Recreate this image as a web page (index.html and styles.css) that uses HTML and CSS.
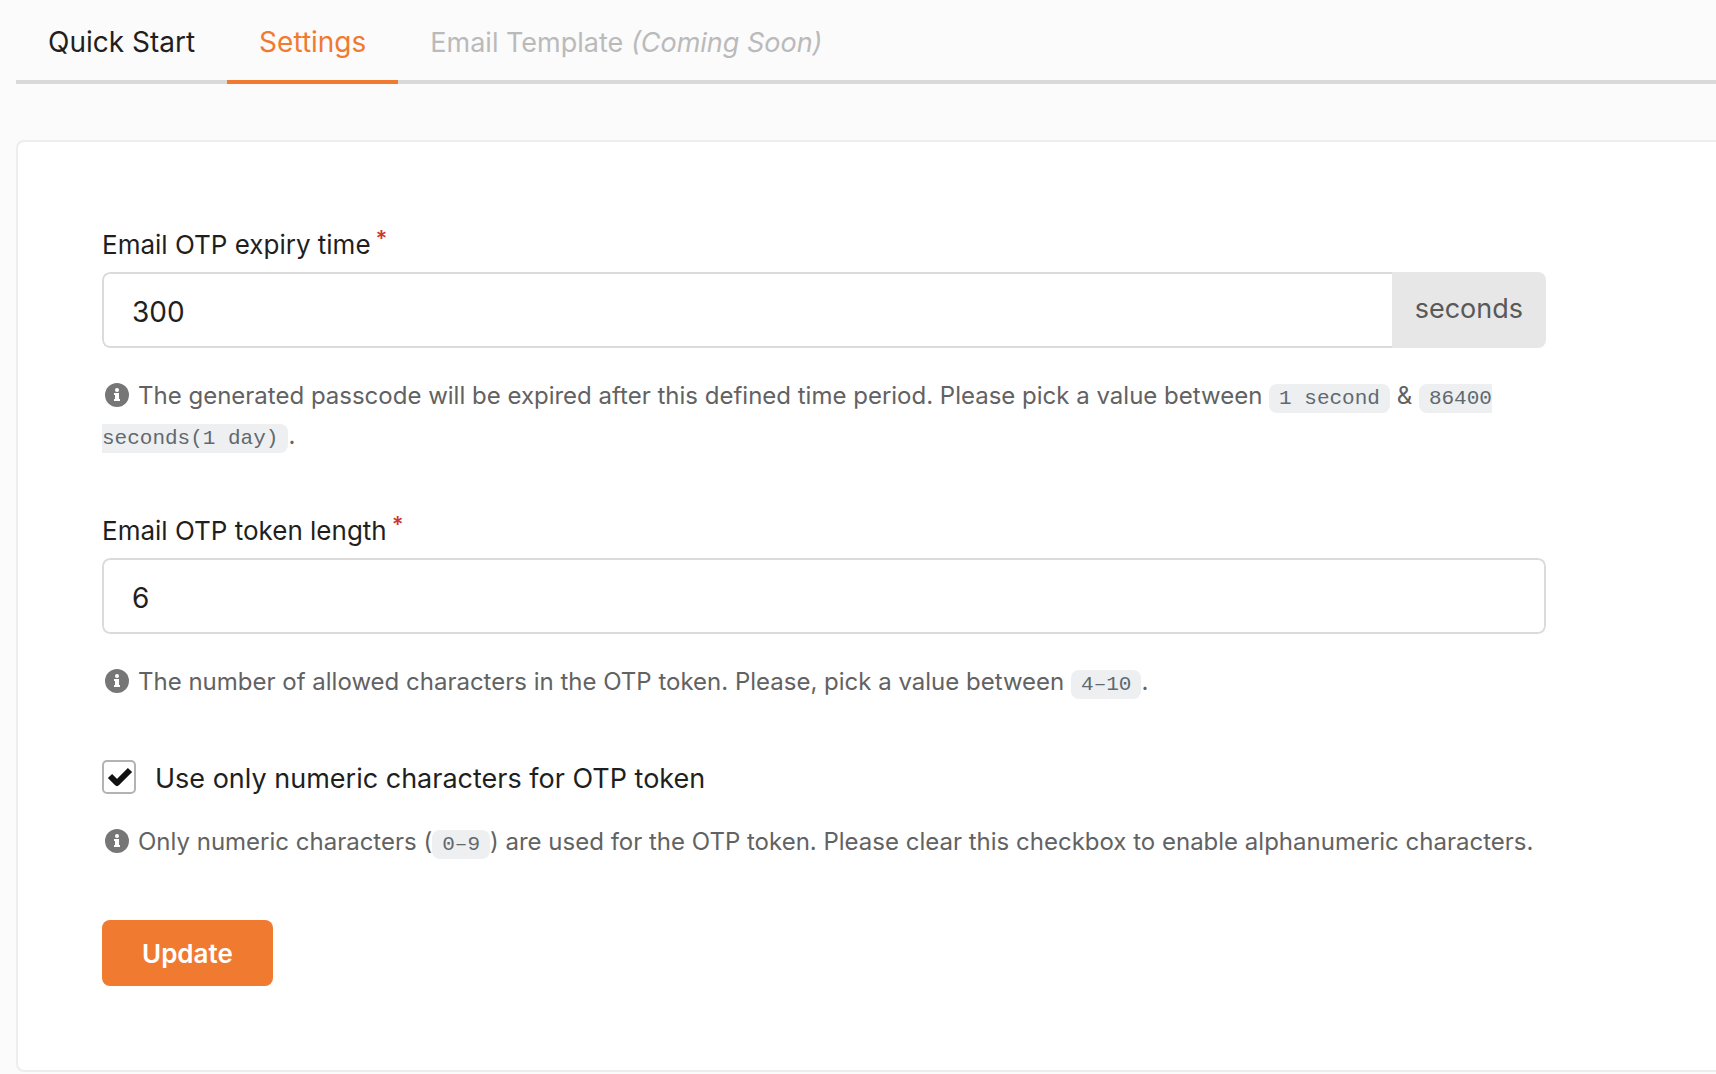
FILE: index.html
```html
<!DOCTYPE html>
<html lang="en">
<head>
<meta charset="utf-8">
<meta name="viewport" content="width=device-width, initial-scale=1">
<title>Email OTP Settings</title>
<link rel="stylesheet" href="styles.css">
</head>
<body>
<svg class="sprite" aria-hidden="true">
  <symbol id="info" viewBox="0 0 24 24">
    <circle cx="12" cy="12" r="12" fill="#767676"/>
    <circle cx="12" cy="7" r="2" fill="#fff"/>
    <path d="M9 10h5v6h1v2H9v-2h1v-4H9z" fill="#fff"/>
  </symbol>
</svg>
<nav class="tabs">
  <a class="tab" href="#quick-start">Quick Start</a>
  <a class="tab tab-active" href="#settings" aria-current="page">Settings</a>
  <a class="tab tab-disabled" aria-disabled="true" href="#email-template">Email Template <em>(Coming Soon)</em></a>
</nav>
<main class="card">
  <form class="form">
    <div class="field">
      <label class="label" for="expiry">Email OTP expiry time<span class="required">*</span></label>
      <div class="input-group">
        <input class="input" id="expiry" type="text" inputmode="numeric" value="300">
        <span class="addon">seconds</span>
      </div>
      <p class="hint"><svg class="icon"><use href="#info"/></svg>The generated passcode will be expired after this defined time period. Please pick a value between <code>1 second</code> &amp; <code>86400 seconds(1 day)</code>.</p>
    </div>
    <div class="field">
      <label class="label" for="length">Email OTP token length<span class="required">*</span></label>
      <div class="input-group">
        <input class="input" id="length" type="text" inputmode="numeric" value="6">
      </div>
      <p class="hint"><svg class="icon"><use href="#info"/></svg>The number of allowed characters in the OTP token. Please, pick a value between <code>4–10</code>.</p>
    </div>
    <div class="field">
      <div class="check-row">
        <span class="check">
          <input class="checkbox" id="numeric" type="checkbox" checked>
          <svg class="tick" viewBox="0 0 26 20" aria-hidden="true"><path d="M3 9l7 7L23 3" fill="none" stroke="#111" stroke-width="6" stroke-linejoin="round"/></svg>
        </span>
        <label class="check-label" for="numeric">Use only numeric characters for OTP token</label>
      </div>
      <p class="hint"><svg class="icon"><use href="#info"/></svg>Only numeric characters (<code>0–9</code>) are used for the OTP token. Please clear this checkbox to enable alphanumeric characters.</p>
    </div>
    <button class="button" type="submit">Update</button>
  </form>
</main>
</body>
</html>
```
FILE: styles.css
```css
* { box-sizing: border-box; }

body {
  margin: 0;
  padding-left: 16px;
  background: #fbfbfb;
  color: #1f1f1f;
  font-family: Inter, "Liberation Sans", sans-serif;
  overflow-x: hidden;
}

.sprite { display: none; }

.tabs {
  display: flex;
  height: 84px;
  box-shadow: inset 0 -4px #d9d9d9;
}

.tab {
  display: flex;
  align-items: center;
  padding: 4px 32px 0;
  border-bottom: 4px solid transparent;
  color: inherit;
  font-size: 28px;
  white-space: pre;
  text-decoration: none;
}

.tab-active {
  border-color: #f07a30;
  color: #f07a30;
}

.tab-disabled {
  color: #bababa;
  font-size: 27px;
}

.card {
  margin-top: 56px;
  padding: 86px 170px 84px 84px;
  border: 2px solid #ededed;
  border-right: 0;
  border-radius: 8px 0 0 8px;
  background: #fff;
}

.form {
  display: flex;
  flex-direction: column;
  align-items: stretch;
  gap: 58px;
}

.label {
  display: block;
  margin-bottom: 10px;
  font-size: 26px;
  line-height: 34px;
}

.required {
  margin-left: 5px;
  color: #cf372f;
  font-size: 22px;
  font-weight: 600;
  line-height: 0;
  vertical-align: 8px;
}

.input-group {
  display: flex;
  height: 76px;
  border-radius: 8px;
  overflow: hidden;
}

.input {
  flex: 1;
  min-width: 0;
  padding: 4px 28px 0;
  border: 2px solid #dbdbdb;
  border-radius: 8px;
  background: #fff;
  color: inherit;
  font-family: inherit;
  font-size: 28px;
}

.input:not(:last-child) {
  border-right: 0;
  border-radius: 8px 0 0 8px;
}

.addon {
  padding: 0 23px;
  background: #e7e7e7;
  color: #595959;
  font-size: 27px;
  line-height: 74px;
}

.hint {
  margin: 28px 0 0;
  color: #626262;
  font-size: 24px;
  line-height: 40px;
}

.icon {
  width: 24px;
  height: 24px;
  margin: 0 9px 0 3px;
  vertical-align: -3px;
}

code {
  padding: 3px 10px;
  border-radius: 8px;
  background: #eeeff1;
  color: #5f6970;
  font-family: "Liberation Mono", monospace;
  font-size: 21px;
  line-height: 1;
}

.check-row {
  display: flex;
  align-items: center;
  gap: 19px;
  height: 34px;
}

.check {
  position: relative;
  width: 34px;
  height: 34px;
}

.checkbox {
  width: 34px;
  height: 34px;
  margin: 0;
  border: 2px solid #b3b3b3;
  border-radius: 5px;
  background: #fff;
  appearance: none;
}

.tick {
  position: absolute;
  top: 7px;
  left: 5px;
  width: 26px;
  height: 20px;
  pointer-events: none;
  visibility: hidden;
}

.checkbox:checked + .tick { visibility: visible; }

.check-label {
  padding-top: 2px;
  font-size: 27px;
}

.button {
  align-self: flex-start;
  height: 66px;
  padding: 0 40px;
  border: 0;
  border-radius: 8px;
  background: #f07a30;
  color: #fff;
  font-family: inherit;
  font-size: 26px;
  font-weight: 600;
}
```
